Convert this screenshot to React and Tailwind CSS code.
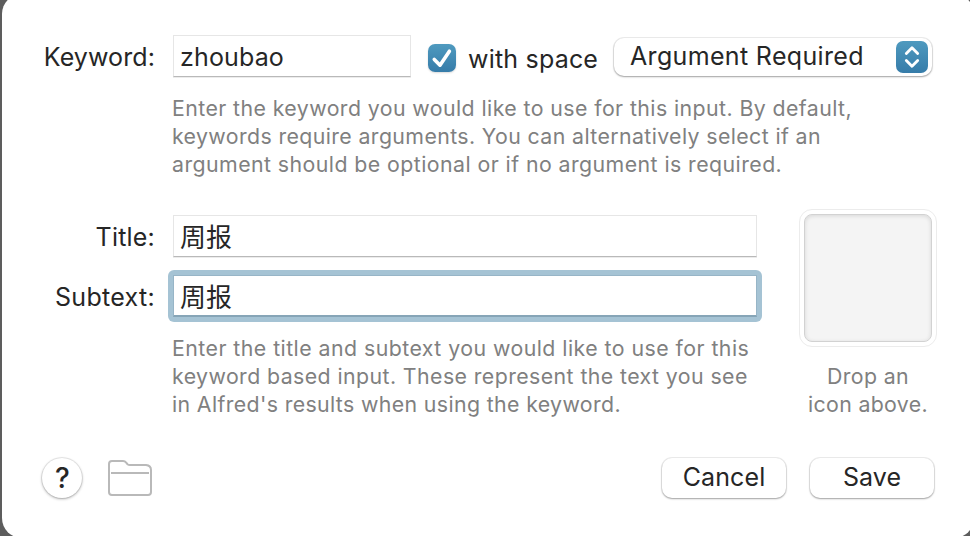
const Label = ({ children, className }) => (
  <div className="flex h-[43px] w-[153px] shrink-0 items-center justify-end pt-px">
    <span className={"whitespace-nowrap text-[25px] leading-[30px] " + className}>{children}</span>
  </div>
);

const Field = ({ children, className }) => (
  <div className={"flex h-[42px] items-center border bg-white pl-[6px] " + className}>
    {children}
  </div>
);

const Button = ({ children }) => (
  <button className="h-[40px] w-[124px] rounded-[10px] bg-white text-[25px] leading-[38px] tracking-[0.1px] pb-[2px] shadow-[0_0_0_1px_rgba(0,0,0,0.07),0_1px_2px_rgba(0,0,0,0.32)]">
    {children}
  </button>
);

function Line({ children, className }) {
  return (
    <div className="whitespace-nowrap">
      <span className={className}>{children}</span>
    </div>
  );
}

export default function App() {
  return (
    <div className="h-[536px] w-[970px] overflow-hidden bg-[#5d5d5d] font-['Inter','Noto_Sans_CJK_SC',sans-serif] text-[#262626]">
      <div className="-mt-[6px] ml-[2px] flex h-[544px] w-[972px] flex-col rounded-[20px] bg-white pt-[41px]">
        <div className="flex h-[43px]">
          <Label className="tracking-[0.1px]">Keyword:</Label>
          <Field className="ml-[18px] w-[238px] border-[#e6e6e6] border-b-[#b9b9b9] pt-[4px] text-[25px] shadow-[0_1px_0_#ececec]">
            <span className="tracking-[0.15px]">zhoubao</span>
          </Field>
          <div className="mt-[9px] ml-[17px] flex h-[28px] w-[28px] shrink-0 items-center justify-center rounded-[7px] bg-gradient-to-b from-[#4f9abf] to-[#367ca9] shadow-[0_1px_2px_rgba(0,0,0,0.15)]">
            <svg width="28" height="28" viewBox="0 0 28 28" fill="none" stroke="white" strokeWidth="3.6" strokeLinecap="round" strokeLinejoin="round">
              <path d="M6.3 15.4 12 21.2 21.4 7.2" />
            </svg>
          </div>
          <span className="mt-[9px] ml-[12px] w-[146px] shrink-0 whitespace-nowrap text-[25px] leading-[30px] tracking-[0.2px]">with space</span>
          <div className="mt-[3px] flex h-[38px] w-[318px] shrink-0 items-center justify-between rounded-[10px] bg-white pr-[4px] pl-[16px] shadow-[0_0_0_1px_rgba(0,0,0,0.07),0_1px_2px_rgba(0,0,0,0.32)]">
            <span className="pb-[2px] text-[25px] leading-[30px] tracking-[0.34px] whitespace-nowrap">Argument Required</span>
            <div className="h-[32px] w-[32px] rounded-[7px] bg-gradient-to-b from-[#4f9abf] to-[#367ca9]">
              <svg width="32" height="32" viewBox="0 0 32 32" fill="none" stroke="white" strokeWidth="2.8" strokeLinecap="round" strokeLinejoin="round">
                <path d="M10.3 12.6 16 6.8 21.7 12.6M10.3 19.4 16 25.2 21.7 19.4" />
              </svg>
            </div>
          </div>
        </div>

        <div className="mt-[16px] ml-[170px] text-[21.3px] leading-[28px] text-[#808080]">
          <Line className="tracking-[0.42px]">Enter the keyword you would like to use for this input. By default,</Line>
          <Line className="tracking-[0.39px]">keywords require arguments. You can alternatively select if an</Line>
          <Line className="tracking-[0.44px]">argument should be optional or if no argument is required.</Line>
        </div>

        <div className="mt-[31px] flex h-[209px]">
          <div className="mt-[6px] w-[755px]">
            <div className="flex h-[55px]">
              <Label className="tracking-[0.2px]">Title:</Label>
              <Field className="ml-[18px] w-[584px] border-[#e6e6e6] border-b-[#b9b9b9] pt-[2px] text-[26px] shadow-[0_1px_0_#ececec]">周报</Field>
            </div>
            <div className="flex h-[52px] items-start">
              <div className="pt-[5px]">
                <Label className="tracking-[0.3px]">Subtext:</Label>
              </div>
              <div className="ml-[13px] rounded-[6px] bg-[#a5c3d4] p-[5px]">
                <Field className="w-[584px] border-[#97b5c7] border-b-2 border-b-[#86a5b7] pt-[3px] text-[26px]">周报</Field>
              </div>
            </div>
            <div className="mt-[12px] ml-[170px] text-[21.3px] leading-[28px] text-[#808080]">
              <Line className="tracking-[0.46px]">Enter the title and subtext you would like to use for this</Line>
              <Line className="tracking-[0.42px]">keyword based input. These represent the text you see</Line>
              <Line className="tracking-[0.37px]">in Alfred's results when using the keyword.</Line>
            </div>
          </div>
          <div className="ml-[42px] w-[138px]">
            <div className="h-[138px] w-[138px] rounded-[13px] border border-[#ececec] p-[4px]">
              <div className="h-[128px] w-[128px] rounded-[8px] border border-[#d2d2d2] bg-[#f4f4f4] shadow-[inset_0_1px_4px_rgba(0,0,0,0.12)]" />
            </div>
            <div className="mt-[15px] text-center text-[21.3px] leading-[28px] text-[#808080]">
              <Line className="tracking-[0.4px]">Drop an</Line>
              <Line className="tracking-[0.35px]">icon above.</Line>
            </div>
          </div>
        </div>

        <div className="mt-[40px] flex items-start pl-[40px]">
          <button className="h-[40px] w-[40px] rounded-full bg-white pl-px text-[28px] leading-[40px] font-medium shadow-[0_0_0_1px_rgba(0,0,0,0.07),0_1px_3px_rgba(0,0,0,0.32)]">?</button>
          <svg className="mt-[1px] ml-[25px]" width="46" height="38" viewBox="0 0 46 38" fill="none" stroke="#b9b9b9" strokeWidth="2">
            <path d="M5 2H16Q18 2 19 3.5L20.5 5.2Q21.5 6 23 6H39Q44 6.5 44 11V33Q44 36 41 36H5Q2 36 2 33V5Q2 2 5 2Z M4 14H42" />
          </svg>
          <div className="ml-[509px] flex gap-[24px]">
            <Button>Cancel</Button>
            <Button>Save</Button>
          </div>
        </div>
      </div>
    </div>
  );
}
